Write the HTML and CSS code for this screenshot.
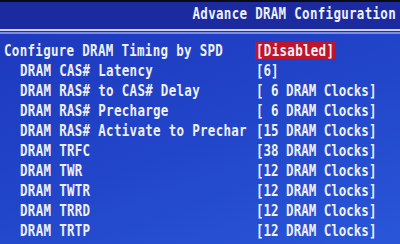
FILE: index.html
```html
<!DOCTYPE html>
<html lang="en">
<head>
  <meta charset="UTF-8" />
  <title>Advance DRAM Configuration</title>
  <link rel="stylesheet" href="styles.css">
</head>
<body>

  <div class="screen">
    <div class="header">
      <span class="txt">Advance DRAM Configuration</span>
    </div>
    <div class="rule"></div>

    <div class="menu">
      <div class="row top">
        <span class="label"><span class="txt">Configure DRAM Timing by SPD</span></span>
        <span class="value selected"><span class="txt">[Disabled]</span></span>
      </div>
      <div class="row">
        <span class="label"><span class="txt">DRAM CAS# Latency</span></span>
        <span class="value"><span class="txt">[6]</span></span>
      </div>
      <div class="row">
        <span class="label"><span class="txt">DRAM RAS# to CAS# Delay</span></span>
        <span class="value"><span class="txt">[ 6 DRAM Clocks]</span></span>
      </div>
      <div class="row">
        <span class="label"><span class="txt">DRAM RAS# Precharge</span></span>
        <span class="value"><span class="txt">[ 6 DRAM Clocks]</span></span>
      </div>
      <div class="row">
        <span class="label"><span class="txt">DRAM RAS# Activate to Prechar</span></span>
        <span class="value"><span class="txt">[15 DRAM Clocks]</span></span>
      </div>
      <div class="row">
        <span class="label"><span class="txt">DRAM TRFC</span></span>
        <span class="value"><span class="txt">[38 DRAM Clocks]</span></span>
      </div>
      <div class="row">
        <span class="label"><span class="txt">DRAM TWR</span></span>
        <span class="value"><span class="txt">[12 DRAM Clocks]</span></span>
      </div>
      <div class="row">
        <span class="label"><span class="txt">DRAM TWTR</span></span>
        <span class="value"><span class="txt">[12 DRAM Clocks]</span></span>
      </div>
      <div class="row">
        <span class="label"><span class="txt">DRAM TRRD</span></span>
        <span class="value"><span class="txt">[12 DRAM Clocks]</span></span>
      </div>
      <div class="row">
        <span class="label"><span class="txt">DRAM TRTP</span></span>
        <span class="value"><span class="txt">[12 DRAM Clocks]</span></span>
      </div>
    </div>
  </div>

</body>
</html>
```

FILE: styles.css
```css
:root {
  --header-bg: #1b2b9f;
  --text: #eef0f8;
  --selected: #c0142a;
}

body {
  margin: 0;
  background-color: #0a0a14;
  font-family: "DejaVu Sans Mono", "Liberation Mono", monospace;
  font-weight: bold;
  font-size: 12.5px;
  letter-spacing: 0.3px;
  color: var(--text);
}

.screen {
  margin-top: 2px;
  height: 242px;
  overflow: hidden;
  background: linear-gradient(160deg, #1d37bc 0%, #2144c8 50%, #2956d8 100%);
}

.txt {
  display: inline-block;
  transform: scaleY(1.26);
  white-space: pre;
}

.header {
  height: 27px;
  background-color: var(--header-bg);
  display: flex;
  justify-content: flex-end;
  align-items: center;
  padding-right: 4px;
  padding-bottom: 5px;
  box-sizing: border-box;
}

.rule {
  height: 2px;
  background-color: #cfd2f0;
  border-bottom: 1px solid #2030a8;
  box-shadow: 0 2px 0 #7d8ee4;
}

.menu {
  padding: 8px 0 0 4px;
}

.row {
  display: flex;
  height: 20px;
  align-items: center;
  padding-left: 16px;
}

.row.top {
  padding-left: 0;
}

.label {
  width: 235px;
}

.row.top .label {
  width: 251px;
}

.value {
  padding: 0 1px;
  letter-spacing: 0;
}

.value.selected {
  background-color: var(--selected);
  height: 17px;
  display: flex;
  align-items: center;
  letter-spacing: 0.3px;
}
```
